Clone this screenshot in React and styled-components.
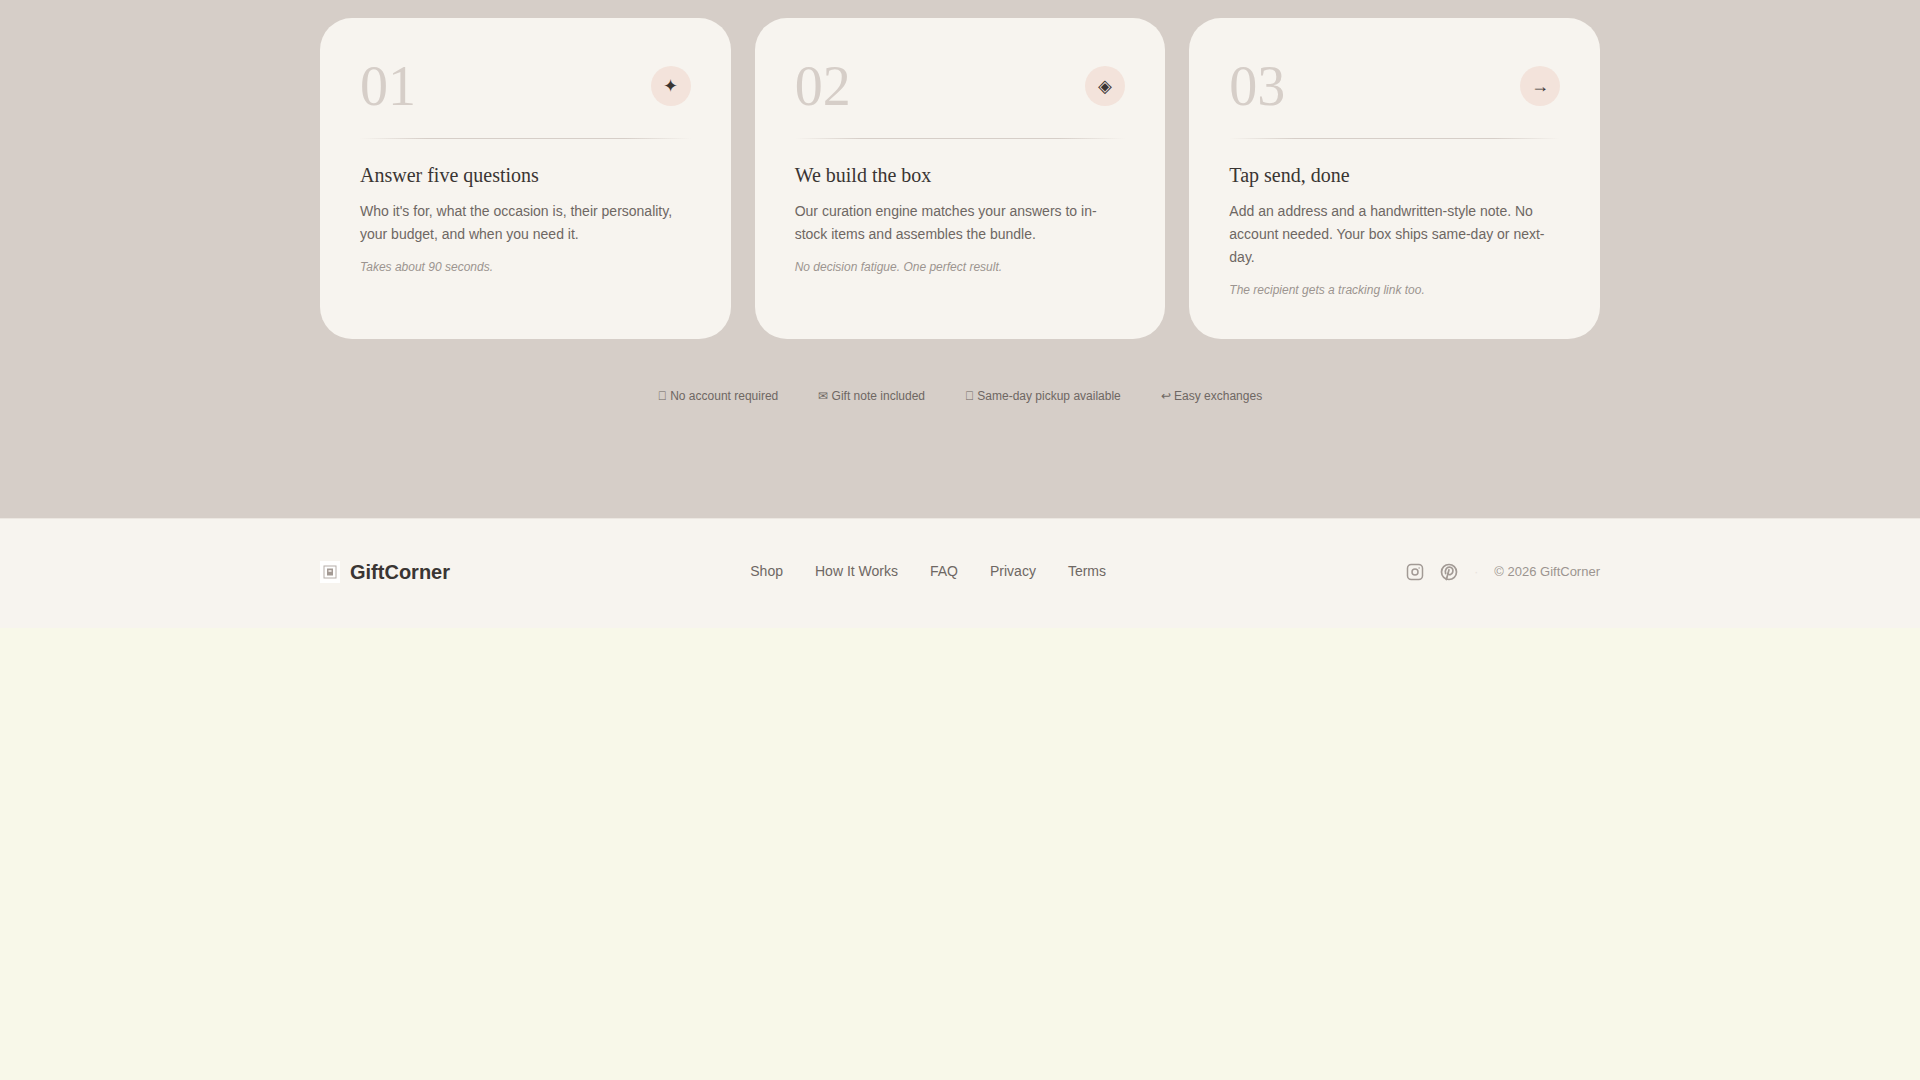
import React from "react";
import styled, { createGlobalStyle } from "styled-components";

const Global = createGlobalStyle`
  html, body { margin: 0; padding: 0; background: #f8f8e9; }
  body { font-family: "Liberation Sans", Arial, sans-serif; }
  * { box-sizing: border-box; }
`;

const Section = styled.section`
  background: #d6cec8;
  height: 518px;
  padding-top: 18px;
`;
const Container = styled.div`
  width: 1280px;
  margin: 0 auto;
`;
const Cards = styled.div`
  display: grid;
  grid-template-columns: repeat(3, 1fr);
  gap: 24px;
`;
const Card = styled.article`
  background: #f7f4ef;
  border-radius: 32px;
  height: 321px;
  padding: 40px;
`;
const CardHead = styled.div`
  display: flex;
  justify-content: space-between;
  align-items: center;
  height: 56px;
`;
const Num = styled.span`
  font-family: "Liberation Serif", serif;
  font-size: 56px;
  line-height: 56px;
  color: #d6cec8;
`;
const IconCircle = styled.span`
  width: 40px;
  height: 40px;
  border-radius: 50%;
  background: #f3e3db;
  color: #3a3533;
  font-size: 18px;
  display: flex;
  align-items: center;
  justify-content: center;
`;
const Divider = styled.div`
  height: 1px;
  margin: 24px 0 23px;
  background: linear-gradient(90deg, transparent, #d6cec8 20%, #d6cec8 80%, transparent);
`;
const Title = styled.h3`
  font-family: "Liberation Serif", serif;
  font-weight: 400;
  font-size: 20px;
  line-height: 26px;
  color: #3a3533;
  margin: 0 0 12px;
`;
const Body = styled.p`
  margin: 0 0 12px;
  font-size: 14px;
  line-height: 23.1px;
  color: #6e6763;
`;
const Note = styled.p`
  margin: 0;
  font-size: 12px;
  line-height: 18px;
  font-style: italic;
  color: #9c9490;
`;
const Perks = styled.div`
  display: flex;
  justify-content: center;
  gap: 40px;
  margin-top: 48px;
  font-size: 12px;
  line-height: 18px;
  color: #6e6763;
`;
const Footer = styled.footer`
  background: #f7f4ef;
  height: 110px;
  box-shadow: inset 0 1px 0 #ece7e1;
`;
const FooterRow = styled(Container)`
  height: 110px;
  padding-bottom: 3px;
  display: flex;
  align-items: center;
  justify-content: space-between;
`;
const Brand = styled.div`
  display: flex;
  align-items: center;
  gap: 10px;
  font-size: 20px;
  font-weight: 700;
  color: #3a3533;
`;
const BrandName = styled.span`
  padding-top: 2px;
`;
const BrandMark = styled.span`
  width: 20px;
  height: 22px;
  background: #fff;
  display: flex;
  align-items: center;
  justify-content: center;
`;
const Nav = styled.nav`
  display: flex;
  gap: 32px;
  margin-bottom: 2px;
`;
const NavLink = styled.a`
  font-size: 14px;
  color: #6e6763;
`;
const Right = styled.div`
  display: flex;
  align-items: center;
  gap: 16px;
  color: #a29a95;
`;
const Dot = styled.span`
  color: #e8e2dc;
  font-size: 12px;
`;
const Copy = styled.span`
  font-size: 13px;
  color: #9c9490;
`;

const steps = [
  { n: "01", i: "✦", t: "Answer five questions", b: "Who it's for, what the occasion is, their personality, your budget, and when you need it.", s: "Takes about 90 seconds." },
  { n: "02", i: "◈", t: "We build the box", b: "Our curation engine matches your answers to in-stock items and assembles the bundle.", s: "No decision fatigue. One perfect result." },
  { n: "03", i: "→", t: "Tap send, done", b: "Add an address and a handwritten-style note. No account needed. Your box ships same-day or next-day.", s: "The recipient gets a tracking link too." },
];

export default function App() {
  return (
    <>
      <Global />
      <Section>
        <Container>
          <Cards>
            {steps.map((c) => (
              <Card key={c.n}>
                <CardHead><Num>{c.n}</Num><IconCircle>{c.i}</IconCircle></CardHead>
                <Divider />
                <Title>{c.t}</Title>
                <Body>{c.b}</Body>
                <Note>{c.s}</Note>
              </Card>
            ))}
          </Cards>
          <Perks>
            <span>{"\uE000"} No account required</span>
            <span>✉ Gift note included</span>
            <span>{"\uE000"} Same-day pickup available</span>
            <span>↩ Easy exchanges</span>
          </Perks>
        </Container>
      </Section>
      <Footer>
        <FooterRow>
          <Brand>
            <BrandMark>
              <svg width="14" height="14" viewBox="0 0 14 14" fill="none"><rect x="1" y="1" width="12" height="12" stroke="#b5aeaa" strokeWidth="1"/><path d="M4 3.500h6v7h-6z" fill="#a39a95"/><path d="M5.500 5h3v2h-3z" fill="#e6e0dc"/></svg>
            </BrandMark>
            <BrandName>GiftCorner</BrandName>
          </Brand>
          <Nav>
            {["Shop", "How It Works", "FAQ", "Privacy", "Terms"].map((l) => <NavLink key={l}>{l}</NavLink>)}
          </Nav>
          <Right>
            <svg width="18" height="18" viewBox="0 0 24 24" fill="none" stroke="currentColor" strokeWidth="2" strokeLinecap="round" strokeLinejoin="round"><rect x="2" y="2" width="20" height="20" rx="5"/><circle cx="12" cy="12" r="4"/><line x1="17.5" y1="6.5" x2="17.51" y2="6.5"/></svg>
            <svg width="18" height="18" viewBox="0 0 24 24" fill="none" stroke="currentColor" strokeWidth="2.300" strokeLinecap="round" strokeLinejoin="round"><circle cx="12" cy="12" r="10"/><path d="M8.500 22l3.500-13"/><path d="M7.500 14c-1.500-5 1.500-8.500 5-8.500s5.500 2.500 4.500 6.500-5.500 4.500-6.500 2"/></svg>
            <Dot>·</Dot>
            <Copy>© 2026 GiftCorner</Copy>
          </Right>
        </FooterRow>
      </Footer>
    </>
  );
}
